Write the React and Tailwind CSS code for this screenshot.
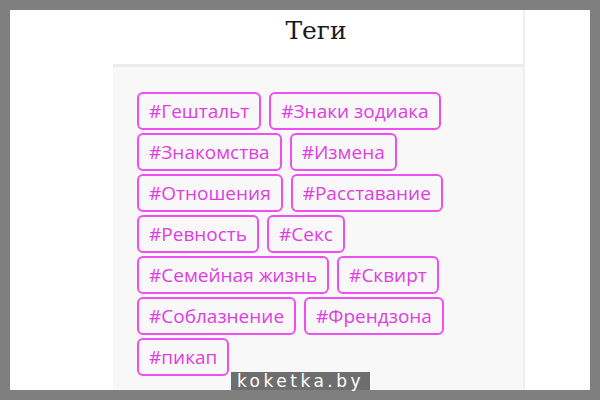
const tags = [
  "Гештальт",
  "Знаки зодиака",
  "Знакомства",
  "Измена",
  "Отношения",
  "Расставание",
  "Ревность",
  "Секс",
  "Семейная жизнь",
  "Сквирт",
  "Соблазнение",
  "Френдзона",
  "пикап",
];

const Tag = ({ name }) => (
  <a
    href="#"
    className="h-[38px] px-[10px] flex items-center border-2 border-[#ef4fef] rounded-[6px] text-[#e03de0] text-[19px] leading-none font-['Open_Sans',sans-serif] whitespace-nowrap"
  >
    #{name}
  </a>
);

export default function App() {
  return (
    <div className="relative w-[600px] h-[400px] bg-[#7f7f7f] p-[10px] overflow-hidden">
      <div className="h-full bg-white flex">
        <div className="w-[103px] shrink-0" />

        {/* tag cloud column */}
        <div className="w-[410px] shrink-0 flex flex-col">
          <div className="h-[54px] shrink-0 flex items-center justify-center pb-[14px] pr-[4px]">
            <h2 className="text-[25px] text-[#1a1a1a] font-['DejaVu_Serif','Liberation_Serif',serif] leading-none">
              Теги
            </h2>
          </div>
          <div className="flex-1 bg-[#f8f8f8] border-t-[3px] border-[#ececec] pt-[25px] pl-[24px] pr-[36px]">
            <div className="flex flex-wrap gap-x-[8px] gap-y-[3px]">
              {tags.map((t) => (
                <Tag key={t} name={t} />
              ))}
            </div>
          </div>
        </div>

        <div className="flex-1 border-l-2 border-[#efefef]" />
      </div>

      {/* watermark */}
      <div className="absolute left-[231px] top-[372px] w-[139px] h-[18px] bg-[#6e6e6e] flex items-center justify-center">
        <span className="text-white text-[17px] tracking-[3.5px] leading-none font-['DejaVu_Sans',sans-serif]">
          koketka.by
        </span>
      </div>
    </div>
  );
}
